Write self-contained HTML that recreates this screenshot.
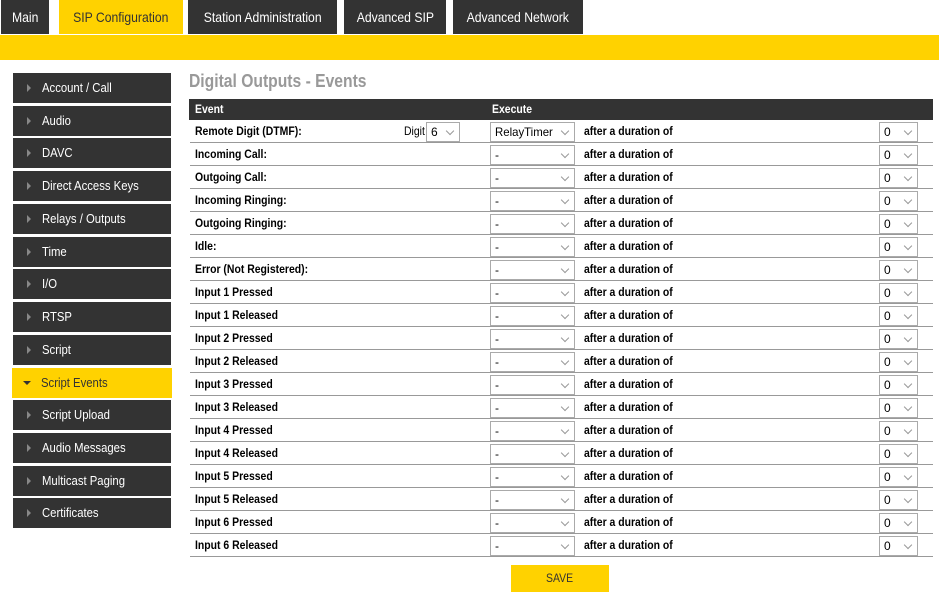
<!DOCTYPE html>
<html><head><meta charset="utf-8"><style>
*{margin:0;padding:0;box-sizing:border-box}
body{width:939px;height:596px;overflow:hidden;background:#fff;font-family:"Liberation Sans",sans-serif;position:relative}
i{font-style:normal;display:inline-block;transform:scaleX(.87);transform-origin:left center;white-space:nowrap}
.tab i{transform-origin:center center}
.tab{position:absolute;top:0;height:34px;background:#333;color:#fff;font-size:14px;line-height:34px;text-align:center;white-space:nowrap}
.tab.on{background:#ffd200;color:#333}
.bar{position:absolute;left:0;top:35px;width:939px;height:25px;background:#ffd200}
.side{position:absolute;left:13px;width:158px;height:30px;background:#333;color:#fff;font-size:13px;line-height:30px;padding-left:29px}
.side:before{content:"";position:absolute;left:14px;top:11px;border-left:4px solid #888;border-top:4px solid transparent;border-bottom:4px solid transparent}
.side.on{background:#ffd200;color:#333;left:12px;width:160px;padding-left:29px}
.side.on:before{left:11px;top:13px;border-top:4px solid #333;border-left:4px solid transparent;border-right:4px solid transparent;border-bottom:0}
h1{position:absolute;left:189px;top:71px;font-size:18px;color:#999;font-weight:bold}
.hd{position:absolute;left:189px;top:99px;width:744px;height:21px;background:#333;color:#fff;font-size:12px;font-weight:bold;line-height:21px}
.row{position:absolute;left:190px;width:743px;height:23px;border-bottom:1px solid #999;font-size:12px;font-weight:bold;color:#000}
.row span{position:absolute;top:4px}
.sel{position:absolute;top:2px;height:20px;border:1px solid #aaa;background:#fff;font-size:12px;font-weight:normal;line-height:18px;padding-left:4px}
.sel:after{content:"";position:absolute;right:6px;top:5px;width:5px;height:5px;border-right:1px solid #999;border-bottom:1px solid #999;transform:rotate(45deg)}
.save{position:absolute;left:511px;top:565px;width:98px;height:27px;background:#ffd200;color:#333;font-size:12px;line-height:27px;text-align:center}
</style></head><body>
<div class="tab" style="left:1px;width:48px"><i>Main</i></div>
<div class="tab on" style="left:59px;width:124px"><i>SIP Configuration</i></div>
<div class="tab" style="left:188px;width:149px"><i>Station Administration</i></div>
<div class="tab" style="left:344px;width:102px"><i>Advanced SIP</i></div>
<div class="tab" style="left:453px;width:130px"><i>Advanced Network</i></div>
<div class="bar"></div>

<div class="side" style="top:73px"><i>Account / Call</i></div>
<div class="side" style="top:106px"><i>Audio</i></div>
<div class="side" style="top:138px"><i>DAVC</i></div>
<div class="side" style="top:171px"><i>Direct Access Keys</i></div>
<div class="side" style="top:204px"><i>Relays / Outputs</i></div>
<div class="side" style="top:237px"><i>Time</i></div>
<div class="side" style="top:269px"><i>I/O</i></div>
<div class="side" style="top:302px"><i>RTSP</i></div>
<div class="side" style="top:335px"><i>Script</i></div>
<div class="side on" style="top:368px"><i>Script Events</i></div>
<div class="side" style="top:400px"><i>Script Upload</i></div>
<div class="side" style="top:433px"><i>Audio Messages</i></div>
<div class="side" style="top:466px"><i>Multicast Paging</i></div>
<div class="side" style="top:498px"><i>Certificates</i></div>

<h1><i>Digital Outputs - Events</i></h1>
<div class="hd"><span style="position:absolute;left:6px"><i>Event</i></span><span style="position:absolute;left:303px"><i>Execute</i></span></div>

<div class="row" style="top:120px"><span style="left:5px"><i>Remote Digit (DTMF):</i></span><span style="left:214px;font-weight:normal"><i>Digit</i></span><div class="sel" style="left:236px;width:34px">6</div><div class="sel" style="left:300px;width:85px"><i style="transform:scaleX(.95)">RelayTimer</i></div><span style="left:394px"><i>after a duration of</i></span><div class="sel" style="left:689px;width:39px">0</div></div>
<div class="row" style="top:143px"><span style="left:5px"><i>Incoming Call:</i></span><div class="sel" style="left:300px;width:85px">-</div><span style="left:394px"><i>after a duration of</i></span><div class="sel" style="left:689px;width:39px">0</div></div>
<div class="row" style="top:166px"><span style="left:5px"><i>Outgoing Call:</i></span><div class="sel" style="left:300px;width:85px">-</div><span style="left:394px"><i>after a duration of</i></span><div class="sel" style="left:689px;width:39px">0</div></div>
<div class="row" style="top:189px"><span style="left:5px"><i>Incoming Ringing:</i></span><div class="sel" style="left:300px;width:85px">-</div><span style="left:394px"><i>after a duration of</i></span><div class="sel" style="left:689px;width:39px">0</div></div>
<div class="row" style="top:212px"><span style="left:5px"><i>Outgoing Ringing:</i></span><div class="sel" style="left:300px;width:85px">-</div><span style="left:394px"><i>after a duration of</i></span><div class="sel" style="left:689px;width:39px">0</div></div>
<div class="row" style="top:235px"><span style="left:5px"><i>Idle:</i></span><div class="sel" style="left:300px;width:85px">-</div><span style="left:394px"><i>after a duration of</i></span><div class="sel" style="left:689px;width:39px">0</div></div>
<div class="row" style="top:258px"><span style="left:5px"><i>Error (Not Registered):</i></span><div class="sel" style="left:300px;width:85px">-</div><span style="left:394px"><i>after a duration of</i></span><div class="sel" style="left:689px;width:39px">0</div></div>
<div class="row" style="top:281px"><span style="left:5px"><i>Input 1 Pressed</i></span><div class="sel" style="left:300px;width:85px">-</div><span style="left:394px"><i>after a duration of</i></span><div class="sel" style="left:689px;width:39px">0</div></div>
<div class="row" style="top:304px"><span style="left:5px"><i>Input 1 Released</i></span><div class="sel" style="left:300px;width:85px">-</div><span style="left:394px"><i>after a duration of</i></span><div class="sel" style="left:689px;width:39px">0</div></div>
<div class="row" style="top:327px"><span style="left:5px"><i>Input 2 Pressed</i></span><div class="sel" style="left:300px;width:85px">-</div><span style="left:394px"><i>after a duration of</i></span><div class="sel" style="left:689px;width:39px">0</div></div>
<div class="row" style="top:350px"><span style="left:5px"><i>Input 2 Released</i></span><div class="sel" style="left:300px;width:85px">-</div><span style="left:394px"><i>after a duration of</i></span><div class="sel" style="left:689px;width:39px">0</div></div>
<div class="row" style="top:373px"><span style="left:5px"><i>Input 3 Pressed</i></span><div class="sel" style="left:300px;width:85px">-</div><span style="left:394px"><i>after a duration of</i></span><div class="sel" style="left:689px;width:39px">0</div></div>
<div class="row" style="top:396px"><span style="left:5px"><i>Input 3 Released</i></span><div class="sel" style="left:300px;width:85px">-</div><span style="left:394px"><i>after a duration of</i></span><div class="sel" style="left:689px;width:39px">0</div></div>
<div class="row" style="top:419px"><span style="left:5px"><i>Input 4 Pressed</i></span><div class="sel" style="left:300px;width:85px">-</div><span style="left:394px"><i>after a duration of</i></span><div class="sel" style="left:689px;width:39px">0</div></div>
<div class="row" style="top:442px"><span style="left:5px"><i>Input 4 Released</i></span><div class="sel" style="left:300px;width:85px">-</div><span style="left:394px"><i>after a duration of</i></span><div class="sel" style="left:689px;width:39px">0</div></div>
<div class="row" style="top:465px"><span style="left:5px"><i>Input 5 Pressed</i></span><div class="sel" style="left:300px;width:85px">-</div><span style="left:394px"><i>after a duration of</i></span><div class="sel" style="left:689px;width:39px">0</div></div>
<div class="row" style="top:488px"><span style="left:5px"><i>Input 5 Released</i></span><div class="sel" style="left:300px;width:85px">-</div><span style="left:394px"><i>after a duration of</i></span><div class="sel" style="left:689px;width:39px">0</div></div>
<div class="row" style="top:511px"><span style="left:5px"><i>Input 6 Pressed</i></span><div class="sel" style="left:300px;width:85px">-</div><span style="left:394px"><i>after a duration of</i></span><div class="sel" style="left:689px;width:39px">0</div></div>
<div class="row" style="top:534px"><span style="left:5px"><i>Input 6 Released</i></span><div class="sel" style="left:300px;width:85px">-</div><span style="left:394px"><i>after a duration of</i></span><div class="sel" style="left:689px;width:39px">0</div></div>

<div class="save"><i style="transform-origin:center">SAVE</i></div>
</body></html>
